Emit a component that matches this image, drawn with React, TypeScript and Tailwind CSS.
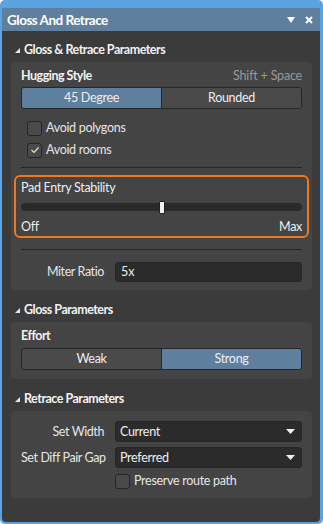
import React from "react";

const font = { fontFamily: 'Lato, "Noto Sans", sans-serif' };

function SectionHeader({ title }: { title: string }) {
  return (
    <div className="flex items-center h-[26px] pt-[2px] pl-[12px] gap-[3px] text-[12.5px] font-bold tracking-[-0.5px] text-[#f2f2f2]">
      <svg width="7" height="7" viewBox="0 0 7 7" className="mt-[1px]">
        <polygon points="6,1 6,6 1,6" fill="#e6e6e6" />
      </svg>
      <span>{title}</span>
    </div>
  );
}

function Segmented({ left, right, selected }: { left: string; right: string; selected: 0 | 1 }) {
  return (
    <div className="flex h-[22px] rounded-[3px] border border-[#262626] overflow-hidden text-[12.5px] tracking-[-0.3px] text-[#eeeeee]">
      <div className={`flex-1 flex items-center justify-center pt-[1px] ${selected === 0 ? "bg-[#5f7f9f]" : "bg-[#4a4a4a]"}`}>{left}</div>
      <div className="w-px bg-[#262626]" />
      <div className={`flex-1 flex items-center justify-center pt-[1px] ${selected === 1 ? "bg-[#5f7f9f]" : "bg-[#4a4a4a]"}`}>{right}</div>
    </div>
  );
}

function Checkbox({ checked, label, rowH }: { checked?: boolean; label: string; rowH: string }) {
  return (
    <div className={`flex items-center gap-[4px] ${rowH} text-[12.5px] tracking-[-0.3px] text-[#e6e6e6]`}>
      <div className="w-[15px] h-[15px] rounded-[3px] border border-[#262626] bg-[#4a4a4a] flex items-center justify-center">
        {checked && (
          <svg width="10" height="10" viewBox="0 0 10 10">
            <polyline points="1.5,5 4,7.5 8.5,2.5" fill="none" stroke="#e0e0e0" strokeWidth="1.2" />
          </svg>
        )}
      </div>
      <span className="pt-[1px]">{label}</span>
    </div>
  );
}

function Caret() {
  return (
    <svg width="9" height="6" viewBox="0 0 9 6">
      <polygon points="0,0 9,0 4.5,5" fill="#f0f0f0" />
    </svg>
  );
}

function Select({ value }: { value: string }) {
  return (
    <div className="flex-1 flex items-center justify-between h-[21px] rounded-[3px] bg-[#2b2b2b] border border-[#262626] pl-[4px] pr-[6px] text-[12.5px] tracking-[-0.3px] text-[#eeeeee]">
      <span className="pt-[1px]">{value}</span>
      <Caret />
    </div>
  );
}

const label = "w-[94px] pr-[11px] pt-[1px] text-right text-[12.5px] tracking-[-0.4px] text-[#e6e6e6] whitespace-nowrap";

export default function App() {
  return (
    <div style={font} className="w-[323px] h-[524px] bg-white">
      <div className="w-[323px] h-[524px] bg-[#5aa3e3] rounded-[5px] pt-[8px] pl-[2px] pr-[3px] pb-[2px] flex flex-col">
        <div className="flex-1 flex flex-col bg-[#3b3b3b] rounded-b-[4px] overflow-hidden">
          <div className="h-[23px] shrink-0 bg-[#5f7f9f] flex items-center justify-between pl-[5px] pr-[7px]">
            <span className="text-[13.5px] font-bold tracking-[-0.5px] text-white pt-[1px]">Gloss And Retrace</span>
            <div className="flex items-center gap-[10px]">
              <svg width="8" height="6" viewBox="0 0 8 6"><polygon points="0,0 8,0 4,6" fill="#ffffff" /></svg>
              <svg width="8" height="8" viewBox="0 0 8 8"><path d="M1,1 L7,7 M7,1 L1,7" stroke="#ffffff" strokeWidth="2" /></svg>
            </div>
          </div>

          <div className="pt-[5px]">
            <SectionHeader title="Gloss & Retrace Parameters" />
          </div>

          <div className="ml-[9px] mr-[8px] rounded-[4px] bg-[#444444] px-[10px] pt-[3px] pb-[8px]">
            <div className="flex items-center justify-between h-[20px] pt-[2px] mb-[2px] text-[12.5px]">
              <span className="font-bold tracking-[-0.5px] text-[#f2f2f2]">Hugging Style</span>
              <span className="text-[#999999] tracking-[-0.2px]">Shift + Space</span>
            </div>
            <Segmented left="45 Degree" right="Rounded" selected={0} />
            <div className="pl-[6px] pt-[8px]">
              <Checkbox label="Avoid polygons" rowH="h-[22px]" />
              <Checkbox checked label="Avoid rooms" rowH="h-[22px]" />
            </div>
            <div className="h-px bg-[#262626] mt-[6px]" />
            <div className="mt-[7px] -mx-[7px] h-[63px] border-2 border-[#e87b22] rounded-[6px] px-[5px]">
              <div className="h-[20px] pt-[2px] flex items-center text-[12.5px] tracking-[-0.3px] text-[#eeeeee]">Pad Entry Stability</div>
              <div className="relative h-[20px] flex items-center">
                <div className="w-full h-[8px] rounded-full bg-[#2a2a2a]" />
                <div className="absolute left-[138px] top-[4px] w-[6px] h-[13px] rounded-[1px] bg-[#f0f0f0] border border-[#222222]" />
              </div>
              <div className="flex justify-between text-[12.5px] tracking-[-0.3px] text-[#eeeeee] h-[19px] pt-[2px] items-center">
                <span>Off</span>
                <span>Max</span>
              </div>
            </div>
            <div className="h-px bg-[#262626] mt-[11px]" />
            <div className="flex items-center mt-[12px]">
              <span className={label}>Miter Ratio</span>
              <div className="flex-1 h-[20px] rounded-[3px] bg-[#2b2b2b] border border-[#262626] flex items-center pl-[5px] pt-[1px] text-[12.5px] text-[#eeeeee]">5x</div>
            </div>
          </div>

          <div className="pt-[6px]">
            <SectionHeader title="Gloss Parameters" />
          </div>
          <div className="ml-[9px] mr-[8px] rounded-[4px] bg-[#444444] px-[10px] pt-[3px] pb-[9px]">
            <div className="flex items-center h-[20px] pt-[2px] mb-[3px] text-[12.5px] font-bold tracking-[-0.5px] text-[#f2f2f2]">Effort</div>
            <Segmented left="Weak" right="Strong" selected={1} />
          </div>

          <div className="pt-[6px]">
            <SectionHeader title="Retrace Parameters" />
          </div>
          <div className="ml-[9px] mr-[8px] rounded-[4px] bg-[#444444] px-[10px] pt-[10px] pb-[9px] flex flex-col gap-[5px]">
            <div className="flex items-center">
              <span className={label}>Set Width</span>
              <Select value="Current" />
            </div>
            <div className="flex items-center">
              <span className={label}>Set Diff Pair Gap</span>
              <Select value="Preferred" />
            </div>
            <div className="pl-[94px]">
              <Checkbox label="Preserve route path" rowH="h-[16px]" />
            </div>
          </div>
        </div>
      </div>
    </div>
  );
}
